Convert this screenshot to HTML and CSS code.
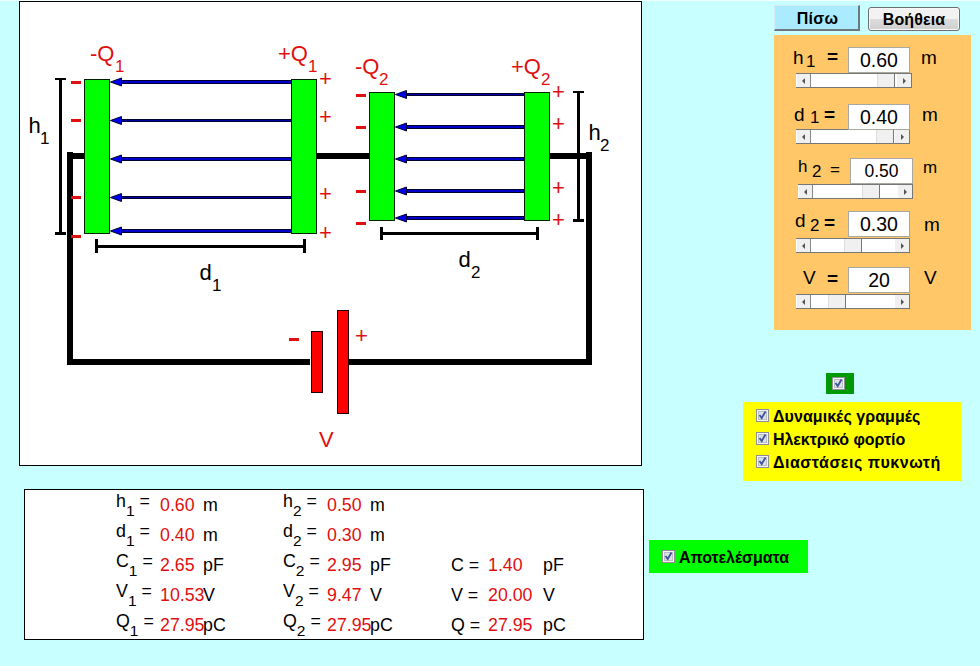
FILE: index.html
```
<!DOCTYPE html>
<html lang="el">
<head>
<meta charset="utf-8">
<title>Πυκνωτές σε σειρά</title>
<link rel="stylesheet" href="styles.css">
</head>
<body>
<main class="page">
  <section class="left">
    <svg class="diagram" viewBox="19 1 623 465" width="623" height="465">
      <defs>
        <g id="minus"><rect x="0" y="-1.5" width="10" height="3"/></g>
        <path id="head" d="M0.5 0L11.5 -4V4Z" fill="#0000f0" stroke="#000030" stroke-width="1"/>
        <g id="arrow1"><rect x="10" y="-2" width="171" height="4" fill="#000030"/><rect x="10" y="-1" width="171" height="2" fill="#0000c8"/><use href="#head"/></g>
        <g id="arrow1thin"><rect x="10" y="-1.5" width="171" height="3" fill="#000030"/><rect x="10" y="-.5" width="171" height="1" fill="#0000a8"/><use href="#head"/></g>
        <g id="arrow2"><rect x="10" y="-2" width="119" height="4" fill="#000030"/><rect x="10" y="-1" width="119" height="2" fill="#0000c8"/><use href="#head"/></g>
        <g id="arrow2thin"><rect x="10" y="-1.5" width="119" height="3" fill="#000030"/><rect x="10" y="-.5" width="119" height="1" fill="#0000a8"/><use href="#head"/></g>
      </defs>
      <rect x="19.5" y="1.5" width="622" height="464" fill="#fff" stroke="#000"/>
      <!-- wires -->
      <path d="M67 152H73V153H85V159H73V359H310V365H67ZM317 153H370V159H317ZM550 153H586V152H592V365H349V359H586V159H550Z"/>
      <!-- plates -->
      <g fill="#0f0" stroke="#002000">
        <rect x="84.5" y="79.5" width="25" height="154"/>
        <rect x="291.5" y="79.5" width="25" height="154"/>
        <rect x="369.5" y="92.5" width="25" height="128"/>
        <rect x="524.5" y="92.5" width="25" height="128"/>
      </g>
      <!-- battery -->
      <g fill="#f00" stroke="#200000">
        <rect x="311.5" y="331.5" width="11" height="61"/>
        <rect x="337.5" y="310.5" width="11" height="103"/>
      </g>
      <!-- field lines -->
      <use href="#arrow1" x="110" y="82"/><use href="#arrow1thin" x="110" y="120.5"/><use href="#arrow1" x="110" y="159"/><use href="#arrow1thin" x="110" y="197.5"/><use href="#arrow1" x="110" y="231"/>
      <use href="#arrow2thin" x="395" y="94.5"/><use href="#arrow2" x="395" y="127"/><use href="#arrow2" x="395" y="159"/><use href="#arrow2" x="395" y="191"/><use href="#arrow2" x="395" y="218"/>
      <!-- dimensions -->
      <path d="M55 78H66V80H62V232H66V235H55V232H59V80H55ZM95 239H98V245H303V239H306V253H303V248H98V253H95ZM573 91H584V93H580V219H584V222H573V219H577V93H573ZM380 227H383V232H536V227H539V240H536V235H383V240H380Z"/>
      <g fill="#e01010">
        <use href="#minus" x="71" y="82.5"/><use href="#minus" x="71" y="120.5"/><use href="#minus" x="71" y="197.5"/><use href="#minus" x="71" y="236.5"/>
        <use href="#minus" x="356" y="95.5"/><use href="#minus" x="356" y="127.5"/><use href="#minus" x="356" y="191.5"/><use href="#minus" x="356" y="223.5"/>
        <use href="#minus" x="289" y="339.5"/>
      </g>
      <g class="charge">
        <text x="319" y="86">+</text><text x="319" y="124">+</text><text x="319" y="201">+</text><text x="319" y="240">+</text>
        <text x="552" y="99">+</text><text x="552" y="131">+</text><text x="552" y="195">+</text><text x="552" y="227">+</text>
        <text x="355" y="343">+</text>
        <text x="90" y="61">-Q<tspan class="sub" x="115" y="72">1</tspan></text>
        <text x="278" y="61">+Q<tspan class="sub" x="308" y="72">1</tspan></text>
        <text x="355" y="74">-Q<tspan class="sub" x="379" y="85">2</tspan></text>
        <text x="511" y="74">+Q<tspan class="sub" x="541" y="85">2</tspan></text>
        <text x="319" y="447">V</text>
      </g>
      <g class="dim">
        <text x="28.5" y="133">h<tspan class="sub" x="40" y="144">1</tspan></text>
        <text x="199.5" y="280">d<tspan class="sub" x="212" y="291">1</tspan></text>
        <text x="458.5" y="267">d<tspan class="sub" x="471" y="278">2</tspan></text>
        <text x="588.5" y="140">h<tspan class="sub" x="600" y="151">2</tspan></text>
      </g>
    </svg>
    <div class="results">
      <span class="name">h<i>1</i> =</span><b>0.60</b><span>m</span><span class="name">h<i>2</i> =</span><b>0.50</b><span>m</span><span></span><b></b><span></span>
      <span class="name">d<i>1</i> =</span><b>0.40</b><span>m</span><span class="name">d<i>2</i> =</span><b>0.30</b><span>m</span><span></span><b></b><span></span>
      <span class="name">C<i>1</i> =</span><b>2.65</b><span>pF</span><span class="name">C<i>2</i> =</span><b>2.95</b><span>pF</span><span>C =</span><b>1.40</b><span>pF</span>
      <span class="name">V<i>1</i> =</span><b>10.53</b><span>V</span><span class="name">V<i>2</i> =</span><b>9.47</b><span>V</span><span>V =</span><b>20.00</b><span>V</span>
      <span class="name">Q<i>1</i> =</span><b>27.95</b><span>pC</span><span class="name">Q<i>2</i> =</span><b>27.95</b><span>pC</span><span>Q =</span><b>27.95</b><span>pC</span>
    </div>
  </section>

  <section class="right">
    <div class="buttons"><div class="btn-back">Πίσω</div><div class="btn-help">Βοήθεια</div></div>
    <div class="controls">
      <div class="control c-h1">
        <div class="line"><span>h</span><span class="s">1</span><span class="eq">=</span><span class="field">0.60</span><span class="unit">m</span></div>
        <div class="slider"><span class="end l"></span><span class="track"><span class="thumb"></span></span><span class="end r"></span></div>
      </div>
      <div class="control c-d1">
        <div class="line"><span>d</span><span class="s">1</span><span class="eq">=</span><span class="field">0.40</span><span class="unit">m</span></div>
        <div class="slider"><span class="end l"></span><span class="track"><span class="thumb"></span></span><span class="end r"></span></div>
      </div>
      <div class="control c-h2">
        <div class="line"><span>h</span><span class="s">2</span><span class="eq">=</span><span class="field">0.50</span><span class="unit">m</span></div>
        <div class="slider"><span class="end l"></span><span class="track"><span class="thumb"></span></span><span class="end r"></span></div>
      </div>
      <div class="control c-d2">
        <div class="line"><span>d</span><span class="s">2</span><span class="eq">=</span><span class="field">0.30</span><span class="unit">m</span></div>
        <div class="slider"><span class="end l"></span><span class="track"><span class="thumb"></span></span><span class="end r"></span></div>
      </div>
      <div class="control c-v">
        <div class="line"><span>V</span><span class="s"></span><span class="eq">=</span><span class="field">20</span><span class="unit">V</span></div>
        <div class="slider"><span class="end l"></span><span class="track"><span class="thumb"></span></span><span class="end r"></span></div>
      </div>
    </div>
    <div class="master"><svg class="check" viewBox="0 0 13 13"><rect x=".5" y=".5" width="12" height="12" fill="#f4f4f4" stroke="#8e8f8f"/><rect x="2.5" y="2.5" width="8" height="8" fill="#dde1e6" stroke="#b8bcc4"/><path d="M3.5 6L5.7 9L9.5 2.5" fill="none" stroke="#40569c" stroke-width="1.9"/></svg></div>
    <div class="options">
      <div class="option"><svg class="check" viewBox="0 0 13 13"><rect x=".5" y=".5" width="12" height="12" fill="#f4f4f4" stroke="#8e8f8f"/><rect x="2.5" y="2.5" width="8" height="8" fill="#dde1e6" stroke="#b8bcc4"/><path d="M3.5 6L5.7 9L9.5 2.5" fill="none" stroke="#40569c" stroke-width="1.9"/></svg><span class="o1">Δυναμικές γραμμές</span></div>
      <div class="option"><svg class="check" viewBox="0 0 13 13"><rect x=".5" y=".5" width="12" height="12" fill="#f4f4f4" stroke="#8e8f8f"/><rect x="2.5" y="2.5" width="8" height="8" fill="#dde1e6" stroke="#b8bcc4"/><path d="M3.5 6L5.7 9L9.5 2.5" fill="none" stroke="#40569c" stroke-width="1.9"/></svg><span class="o2">Ηλεκτρικό φορτίο</span></div>
      <div class="option"><svg class="check" viewBox="0 0 13 13"><rect x=".5" y=".5" width="12" height="12" fill="#f4f4f4" stroke="#8e8f8f"/><rect x="2.5" y="2.5" width="8" height="8" fill="#dde1e6" stroke="#b8bcc4"/><path d="M3.5 6L5.7 9L9.5 2.5" fill="none" stroke="#40569c" stroke-width="1.9"/></svg><span class="o3">Διαστάσεις πυκνωτή</span></div>
    </div>
    <div class="show-results"><svg class="check" viewBox="0 0 13 13"><rect x=".5" y=".5" width="12" height="12" fill="#f4f4f4" stroke="#8e8f8f"/><rect x="2.5" y="2.5" width="8" height="8" fill="#dde1e6" stroke="#b8bcc4"/><path d="M3.5 6L5.7 9L9.5 2.5" fill="none" stroke="#40569c" stroke-width="1.9"/></svg><span class="o4">Αποτελέσματα</span></div>
  </section>
</main>
</body>
</html>
```
FILE: styles.css
```
* { box-sizing: border-box; }
body { margin: 0; background: #c8ffff; font-family: "Liberation Sans", Arial, sans-serif; color: #000; }
.page { display: flex; width: 980px; height: 666px; overflow: hidden; border-top: 1px solid #f0ffff; }
.left { width: 649px; flex: none; }
.right { width: 331px; display: flex; flex-direction: column; align-items: flex-start; }

.diagram { display: block; margin-left: 19px; }
.charge, .dim { font-size: 22px; }
.charge { fill: #e01010; }
.sub { font-size: 17px; }

.results {
  margin: 23px 0 0 24px; width: 620px; height: 151px; padding-left: 91px;
  background: #fff; border: 1px solid #000;
  display: grid; grid-template-columns: 44px 43px 80px 44px 43px 81px 37px 55px 60px;
  grid-auto-rows: 30px; font-size: 17.8px; line-height: 30px; white-space: nowrap;
}
.results b { font-weight: normal; color: #e01010; }
.results .name { line-height: 22px; }
.results i { font-style: normal; font-size: 15.5px; line-height: 0; vertical-align: -9px; }

.buttons { display: flex; margin: 4px 0 0 125px; gap: 8px; font-size: 16px; font-weight: bold; text-align: center; }
.btn-back { width: 86px; height: 26px; padding-left: 2px; line-height: 25px; background: #aaebff; border: solid; border-width: 1px 2px 2px 1px; border-color: #d4ecf4 #6c7a80 #6c7a80 #d4ecf4; letter-spacing: .3px; }
.btn-help { width: 92px; height: 24px; margin-top: 2px; line-height: 24px; border: 1px solid #707070; border-radius: 3px; background: linear-gradient(#f2f2f2 0 50%, #dcdcdc 51%, #cfcfcf); box-shadow: inset 0 0 0 1px #f8f8f8; letter-spacing: .1px; }

.controls { margin: 4px 0 0 125px; width: 197px; height: 295px; padding-top: 12px; background: #ffc768; }
.control { --fs: 19px; }
.line { display: grid; height: 26px; align-items: start; font-size: var(--fs); line-height: 20px; }
.line > :first-child, .unit { margin-top: 1px; }
.line .s { font-size: 17px; }
.eq { font-weight: bold; }
.field { width: 62px; height: 26px; line-height: 25px; background: #fff; border: 1px solid #a8a8a0; text-align: center; font-size: calc(var(--fs) + .5px); }
.slider { display: flex; height: 15px; margin-left: 22px; width: 114px; border: solid #777; border-width: 1px 1px 1px 0; background: #fff; }
.end { width: 15px; flex: none; background: #f0f0f0; border-right: 1px solid #888; display: flex; align-items: center; justify-content: center; border-left: 1px solid #fff; }
.end::before { content: ""; border: 3px solid transparent; }
.end.l::before { border-right-color: #555; border-left: 0; }
.end.r::before { border-left-color: #555; border-right: 0; }
.end.r { border-right: 0; }
.track { flex: 1; }
.thumb { display: block; width: 18px; height: 13px; margin-left: var(--at); background: #f0f0f0; border-left: 1px solid #ddd; border-right: 1px solid #777; }

.c-h1 { --at: 66px; height: 57px; }
.c-h1 .line { padding-left: 19px; grid-template-columns: 13px 21px 21px 73px 30px; }
.c-h1 .s { margin-top: 5px; }
.c-h1 .slider { width: 116px; }
.c-d1 { --at: 65px; height: 54px; }
.c-d1 .line { padding-left: 20px; grid-template-columns: 16px 14px 24px 74px 30px; }
.c-d1 .slider { margin-top: -1px; }
.c-d1 .s { margin-top: 4px; }
.c-d1 .eq { margin-top: 1px; }
.c-h2 { --at: 49px; --fs: 17px; height: 53px; }
.c-h2 .line { padding-left: 24px; grid-template-columns: 14px 18px 20px 73px 30px; }
.c-h2 .line > :first-child { margin-top: -1px; }
.c-h2 .s { margin-top: 4px; }
.c-h2 .eq { font-weight: normal; margin-top: 2px; }
.c-h2 .field { width: 63px; }
.c-h2 .unit { margin-top: 0; }
.c-h2 .slider { margin-left: 24px; width: 115px; }
.c-d2 { --at: 33px; height: 56px; }
.c-d2 .line { padding-left: 21px; grid-template-columns: 15px 14px 24px 76px 30px; }
.c-d2 .line > :first-child { margin-top: 0; }
.c-d2 .s { margin-top: 5px; }
.c-d2 .eq { margin-top: 2px; }
.c-d2 .unit { margin-top: 4px; }
.c-v { --at: 17px; }
.c-v .line { padding-left: 29px; grid-template-columns: 15px 9px 21px 76px 30px; }
.c-v .eq { margin-top: 2px; }
.c-v .unit { margin-top: 1px; }
.c-d2 .slider, .c-v .slider { margin-top: 1px; }

.check { width: 13px; height: 13px; flex: none; display: block; }
.master { margin: 43px 0 0 177px; width: 28px; height: 21px; padding: 4px 0 0 6px; background: #009900; }
.options { margin: 8px 0 0 94px; width: 219px; height: 79px; padding: 2px 0 0 13px; background: #ff0; }
.option { display: flex; align-items: center; height: 23px; }
.option span, .show-results span { margin-left: 4px; padding-top: 2px; font-size: 16px; font-weight: bold; white-space: nowrap; }
.option .o1 { letter-spacing: .06px; }
.option .o2 { letter-spacing: -.06px; }
.option .o3 { letter-spacing: .52px; }
.show-results .o4 { letter-spacing: -.06px; }
.show-results { margin-top: 59px; width: 159px; height: 33px; padding-left: 13px; background: #0f0; display: flex; align-items: center; }
```
